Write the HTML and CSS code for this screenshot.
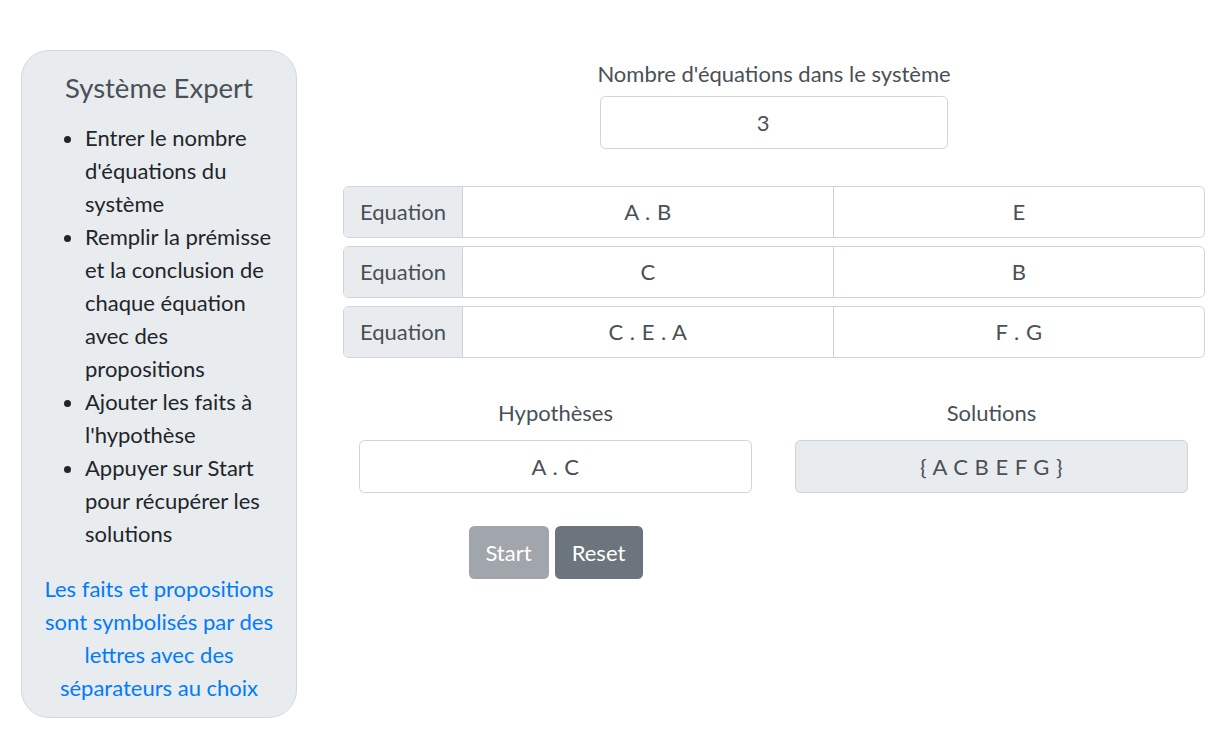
FILE: index.html
```html
<!DOCTYPE html>
<html lang="fr">
<head>
<meta charset="utf-8">
<title>Système Expert</title>
<link rel="stylesheet" href="styles.css">
</head>
<body>
<div class="page">
  <aside class="sidebar">
    <h5 class="title">Système Expert</h5>
    <ul class="steps">
      <li>Entrer le nombre d'équations du système</li>
      <li>Remplir la prémisse et la conclusion de chaque équation avec des propositions</li>
      <li>Ajouter les faits à l'hypothèse</li>
      <li>Appuyer sur Start pour récupérer les solutions</li>
    </ul>
    <p class="note">Les faits et propositions sont symbolisés par des lettres avec des séparateurs au choix</p>
  </aside>
  <main class="main">
    <div class="count">
      <label class="label">Nombre d'équations dans le système</label>
      <div class="field count-field">3</div>
    </div>
    <div class="equations">
      <div class="eq-row">
        <div class="eq-prepend">Equation</div>
        <div class="eq-cell">A . B</div>
        <div class="eq-cell">E</div>
      </div>
      <div class="eq-row">
        <div class="eq-prepend">Equation</div>
        <div class="eq-cell">C</div>
        <div class="eq-cell">B</div>
      </div>
      <div class="eq-row">
        <div class="eq-prepend">Equation</div>
        <div class="eq-cell">C . E . A</div>
        <div class="eq-cell">F . G</div>
      </div>
    </div>
    <div class="results">
      <div class="col">
        <label class="label label-lg">Hypothèses</label>
        <div class="field">A . C</div>
        <div class="buttons">
          <button class="btn btn-start">Start</button>
          <button class="btn btn-reset">Reset</button>
        </div>
      </div>
      <div class="col">
        <label class="label label-lg">Solutions</label>
        <div class="field readonly">{ A C B E F G }</div>
      </div>
    </div>
  </main>
</div>
</body>
</html>
```
FILE: styles.css
```css
* { box-sizing: border-box; }
html, body { margin: 0; padding: 0; background: #fff; }
body {
  font-family: Lato, "Noto Sans", "DejaVu Sans", sans-serif;
  font-size: 22px;
  line-height: 33px;
  color: #212529;
}
.page {
  display: flex;
  align-items: flex-start;
  padding: 50px 12px 0 21px;
  gap: 46px;
}
.sidebar {
  flex: 0 0 276px;
  width: 276px;
  background: #e9ecef;
  border: 1px solid #d3d7db;
  border-radius: 28px;
  padding: 20px 8px 13px 8px;
}
.title {
  margin: 0 0 17px 0;
  text-align: center;
  font-size: 27.5px;
  font-weight: 400;
  line-height: 33px;
  color: #495057;
}
.steps {
  margin: 0 0 22px 0;
  padding-left: 55px;
}
.note {
  margin: 0;
  text-align: center;
  color: #007bff;
}
.main {
  flex: 1;
  width: 862px;
  padding-top: 7px;
}
.count {
  display: flex;
  flex-direction: column;
  align-items: center;
}
.label {
  display: block;
  text-align: center;
  color: #495057;
  margin-bottom: 6px;
}
.label-lg { margin-bottom: 11px; }
.field {
  height: 53px;
  border: 1px solid #ced4da;
  border-radius: 5.5px;
  background: #fff;
  color: #495057;
  text-align: center;
  line-height: 51px;
  letter-spacing: 0.5px;
}
.field.readonly { background: #e9ecef; }
.count-field { width: 348px; padding-right: 21px; }
.equations {
  margin-top: 37px;
  display: flex;
  flex-direction: column;
  gap: 8px;
}
.eq-row {
  display: flex;
  height: 52px;
  border: 1px solid #ced4da;
  border-radius: 5.5px;
  overflow: hidden;
}
.eq-prepend {
  flex: 0 0 119px;
  background: #e9ecef;
  border-right: 1px solid #ced4da;
  color: #495057;
  text-align: center;
  line-height: 50px;
}
.eq-cell {
  flex: 1;
  color: #495057;
  text-align: center;
  line-height: 50px;
  letter-spacing: 0.5px;
}
.eq-cell + .eq-cell { border-left: 1px solid #ced4da; }
.results {
  margin-top: 38px;
  display: grid;
  grid-template-columns: 1fr 1fr;
  gap: 43px;
  padding: 0 17px 0 16px;
}
.col { display: flex; flex-direction: column; }
.buttons {
  margin-top: 33px;
  display: flex;
  justify-content: center;
  gap: 6px;
}
.btn {
  font-family: inherit;
  font-size: 22px;
  line-height: 33px;
  height: 53px;
  padding: 0;
  border: 1px solid transparent;
  border-radius: 5.5px;
  color: #fff;
  cursor: pointer;
}
.btn-start { background: #a1a6ac; width: 80px; }
.btn-reset { background: #6c757d; width: 88px; }
```
